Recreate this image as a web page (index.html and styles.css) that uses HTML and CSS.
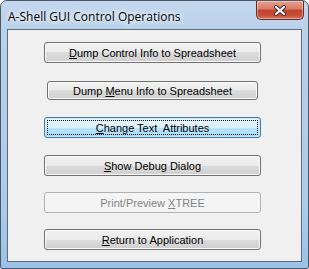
FILE: index.html
```html
<!DOCTYPE html>
<html lang="en">
<head>
  <meta charset="UTF-8">
  <title>A-Shell GUI Control Operations</title>
  <link rel="stylesheet" href="styles.css">
</head>
<body>
  <div class="window">
    <div class="titlebar">
      <span class="title">A-Shell GUI Control Operations</span>
      <button class="close" title="Close">
        <svg width="14" height="11" viewBox="0 0 14 11">
          <path d="M3 2 L11 9 M11 2 L3 9" stroke="#3b2a2a" stroke-width="4" stroke-linecap="round"/>
          <path d="M3 2 L11 9 M11 2 L3 9" stroke="#fff" stroke-width="2.2" stroke-linecap="round"/>
        </svg>
      </button>
    </div>
    <div class="content">
      <button class="btn b1"><u>D</u>ump Control Info to Spreadsheet</button>
      <button class="btn b2">Dump <u>M</u>enu Info to Spreadsheet</button>
      <button class="btn b3 focused"><span class="focus"><u>C</u>hange Text&nbsp; Attributes</span></button>
      <button class="btn b4"><u>S</u>how Debug Dialog</button>
      <button class="btn b5" disabled>Print/Preview <u>X</u>TREE</button>
      <button class="btn b6"><u>R</u>eturn to Application</button>
    </div>
  </div>
</body>
</html>
```

FILE: styles.css
```css
body {
  margin: 0;
  background: #fff;
}

.window {
  width: 307px;
  height: 267px;
  border: 1px solid #4c5866;
  border-radius: 7px 7px 2px 2px;
  background: linear-gradient(#c4d8ee, #b9d1ea 30px, #aacbea 80%, #98c2e8);
  display: flex;
  flex-direction: column;
}

.titlebar {
  height: 28px;
  display: flex;
  align-items: flex-start;
  padding-left: 7px;
}

.title {
  margin-top: 7px;
  font-family: "Open Sans", "Noto Sans", sans-serif;
  font-size: 12px;
  color: #000;
  text-shadow: 0 0 6px #fff, 0 0 4px #fff;
}

.close {
  margin-left: auto;
  margin-right: 4px;
  width: 48px;
  height: 19px;
  padding: 0;
  border: 1px solid #6b2a24;
  border-top: none;
  border-radius: 0 0 5px 5px;
  background: linear-gradient(#e8a493, #d47a66 45%, #c1452f 50%, #c74d35 80%, #d87a5c);
  box-shadow: inset 0 0 0 1px rgba(255, 220, 210, 0.5);
  display: flex;
  align-items: center;
  justify-content: center;
}

.content {
  flex: 1;
  margin: 0 6px 6px 6px;
  border: 1px solid #5e6b78;
  background: #f0f0f0;
  display: flex;
  flex-direction: column;
  align-items: flex-start;
  padding-left: 36px;
}

.btn {
  width: 217px;
  height: 21px;
  padding: 0;
  border: 1px solid #707070;
  border-radius: 3px;
  background: linear-gradient(#f2f2f2, #ebebeb 50%, #dddddd 50%, #cfcfcf);
  box-shadow: inset 0 0 0 1px #fbfbfb;
  font-family: "Liberation Sans", Arial, sans-serif;
  font-size: 11px;
  color: #000;
}

.b1 { margin-top: 12px; }
.b2 { margin-top: 18px; margin-left: 3px; width: 211px; height: 19px; }
.b3 { margin-top: 17px; }
.b4 { margin-top: 17px; }
.b5 { margin-top: 16px; }
.b6 { margin-top: 16px; }

.focused {
  border-color: #3c7fb1;
  background: linear-gradient(#eaf6fd, #d9f0fc 50%, #bee6fd 50%, #a7d9f5);
  box-shadow: inset 0 0 0 1px #c6e6f8;
  padding: 2px;
}

.focus {
  display: flex;
  align-items: center;
  justify-content: center;
  height: 100%;
  box-sizing: border-box;
  border: 1px dotted #000;
}

.btn:disabled {
  border-color: #adb2b5;
  background: #f4f4f4;
  box-shadow: none;
  color: #838383;
}
```
